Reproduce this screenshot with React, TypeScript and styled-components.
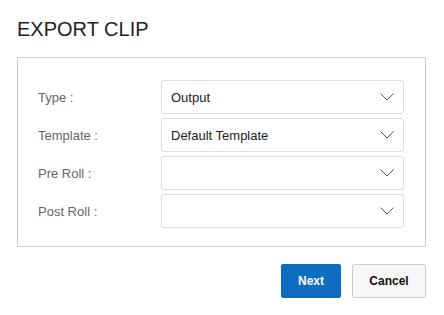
import { Fragment } from 'react'
import styled, { createGlobalStyle } from 'styled-components'

const Global = createGlobalStyle`
  body {
    margin: 0;
    background: #fff;
    font-family: Arial, 'Liberation Sans', sans-serif;
  }
`

const Dialog = styled.div`
  width: 444px;
  height: 315px;
  box-sizing: border-box;
  padding: 17px 18px 0 17px;
`

const Title = styled.h1`
  margin: 0;
  font-size: 20px;
  line-height: 24px;
  font-weight: 400;
  color: #222;
`

const Panel = styled.div`
  margin-top: 16px;
  border: 1px solid #ccc;
  padding: 22px 21px 18px 20px;
  display: grid;
  grid-template-columns: 123px 1fr;
  row-gap: 4px;
  align-items: center;
`

const Label = styled.label`
  font-size: 13px;
  color: #666;
`

const Select = styled.div`
  height: 34px;
  box-sizing: border-box;
  border: 1px solid #ddd;
  border-radius: 3px;
  padding: 0 9px;
  display: flex;
  align-items: center;
  justify-content: space-between;
  font-size: 13px;
  color: #222;
`

const Chevron = () => (
  <svg width="14" height="8" viewBox="0 0 14 8">
    <path d="M0.5 0.5 L7 7 L13.5 0.5" fill="none" stroke="#555" strokeWidth="1" />
  </svg>
)

const Actions = styled.div`
  margin-top: 17px;
  display: flex;
  justify-content: flex-end;
  gap: 11px;
`

const Button = styled.button<{ $primary?: boolean }>`
  height: 34px;
  box-sizing: border-box;
  padding: 0;
  width: ${({ $primary }) => ($primary ? '60px' : '74px')};
  border-radius: 2px;
  border: 1px solid ${({ $primary }) => ($primary ? '#0f6cbd' : '#ccc')};
  background: ${({ $primary }) => ($primary ? '#0f6dbf' : '#f7f7f7')};
  color: ${({ $primary }) => ($primary ? '#fff' : '#111')};
  font-family: Arial, 'Liberation Sans', sans-serif;
  font-size: 12px;
  font-weight: 700;
`

const fields = [
  { label: 'Type :', value: 'Output' },
  { label: 'Template :', value: 'Default Template' },
  { label: 'Pre Roll :', value: '' },
  { label: 'Post Roll :', value: '' },
]

export default function App() {
  return (
    <Dialog>
      <Global />
      <Title>EXPORT CLIP</Title>
      <Panel>
        {fields.map((f) => (
          <Fragment key={f.label}>
            <Label>{f.label}</Label>
            <Select>
              <span>{f.value}</span>
              <Chevron />
            </Select>
          </Fragment>
        ))}
      </Panel>
      <Actions>
        <Button $primary>Next</Button>
        <Button>Cancel</Button>
      </Actions>
    </Dialog>
  )
}
